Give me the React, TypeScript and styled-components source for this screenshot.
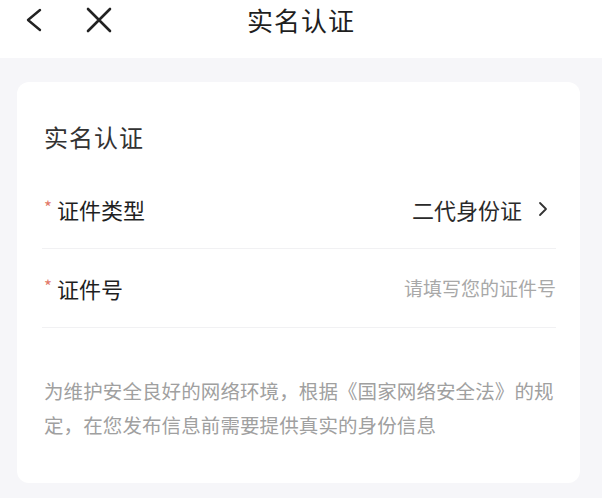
import React from 'react';
import styled, { createGlobalStyle } from 'styled-components';

const GlobalStyle = createGlobalStyle`
  html, body {
    margin: 0;
    padding: 0;
    background: #ffffff;
  }
  body {
    font-family: "Noto Sans CJK SC", "Noto Sans", sans-serif;
    -webkit-font-smoothing: antialiased;
  }
`;

const Page = styled.div`
  width: 602px;
  min-height: 498px;
  display: flex;
  flex-direction: column;
`;

const NavBar = styled.header`
  height: 58px;
  background: #ffffff;
  display: grid;
  grid-template-columns: 1fr auto 1fr;
  align-items: start;
  padding-top: 1px;
  box-sizing: border-box;
`;

const NavLeft = styled.div`
  height: 38px;
  display: flex;
  align-items: center;
  gap: 44px;
  padding-left: 26px;
`;

const NavButton = styled.button`
  border: 0;
  background: none;
  padding: 0;
  display: flex;
  align-items: center;
  justify-content: center;
  color: #222222;
  cursor: pointer;
`;

const NavTitle = styled.h1`
  margin: 0;
  height: 38px;
  line-height: 38px;
  font-size: 26px;
  font-weight: 400;
  color: #1f1f1f;
  letter-spacing: 1px;
`;

const Body = styled.main`
  flex: 1;
  background: #f6f6f9;
  padding: 24px 22px 16px 17px;
`;

const Card = styled.section`
  background: #ffffff;
  border-radius: 12px;
  padding: 37px 24px 41px 27px;
`;

const CardTitle = styled.h2`
  margin: 0 0 15px;
  font-size: 24px;
  line-height: 36px;
  font-weight: 400;
  color: #333333;
  letter-spacing: 1px;
`;

const Row = styled.div`
  height: 78px;
  display: flex;
  align-items: center;
  justify-content: space-between;
  border-bottom: 1px solid #f1f1f3;
  margin-left: -2px;
  padding-left: 2px;
`;

const Label = styled.div`
  display: flex;
  align-items: center;
  font-size: 22px;
  line-height: 30px;
  font-weight: 400;
  color: #1f1f1f;
`;

const Required = styled.span`
  color: #e27a6a;
  font-size: 17px;
  margin-right: 5px;
  position: relative;
  top: -2px;
`;

const Value = styled.div<{ $placeholder?: boolean }>`
  display: flex;
  align-items: center;
  gap: 16px;
  padding-right: ${(p) => (p.$placeholder ? '0' : '8px')};
  font-size: ${(p) => (p.$placeholder ? '19px' : '22px')};
  line-height: 30px;
  color: ${(p) => (p.$placeholder ? '#a8a8a8' : '#2a2a2a')};
`;

const Notice = styled.p`
  margin: 46px 0 0;
  font-size: 19.5px;
  line-height: 34px;
  color: #a0a0a0;
  letter-spacing: 0.1px;
`;

const Chevron: React.FC<{ dir: 'left' | 'right'; w: number; h: number; sw: number }> = ({ dir, w, h, sw }) => (
  <svg width={w} height={h} viewBox={`0 0 ${w} ${h}`} fill="none">
    <path
      d={dir === 'left' ? `M${w - 2} 2 L2 ${h / 2} L${w - 2} ${h - 2}` : `M2 2 L${w - 2} ${h / 2} L2 ${h - 2}`}
      stroke="currentColor"
      strokeWidth={sw}
      strokeLinecap="round"
      strokeLinejoin="round"
    />
  </svg>
);

const CloseIcon = () => (
  <svg width="26" height="26" viewBox="0 0 26 26" fill="none">
    <path d="M2 2 L24 24 M24 2 L2 24" stroke="currentColor" strokeWidth="2.6" strokeLinecap="round" />
  </svg>
);

const Arrow = styled.span`
  display: flex;
  color: #333333;
`;

export default function App() {
  return (
    <Page>
      <GlobalStyle />
      <NavBar>
        <NavLeft>
          <NavButton aria-label="返回">
            <Chevron dir="left" w={16} h={24} sw={2.4} />
          </NavButton>
          <NavButton aria-label="关闭">
            <CloseIcon />
          </NavButton>
        </NavLeft>
        <NavTitle>实名认证</NavTitle>
        <div />
      </NavBar>
      <Body>
        <Card>
          <CardTitle>实名认证</CardTitle>
          <Row>
            <Label>
              <Required>*</Required>证件类型
            </Label>
            <Value>
              二代身份证
              <Arrow>
                <Chevron dir="right" w={10} h={16} sw={1.8} />
              </Arrow>
            </Value>
          </Row>
          <Row>
            <Label>
              <Required>*</Required>证件号
            </Label>
            <Value $placeholder>请填写您的证件号</Value>
          </Row>
          <Notice>
            为维护安全良好的网络环境，根据《国家网络安全法》的规定，在您发布信息前需要提供真实的身份信息
          </Notice>
        </Card>
      </Body>
    </Page>
  );
}
